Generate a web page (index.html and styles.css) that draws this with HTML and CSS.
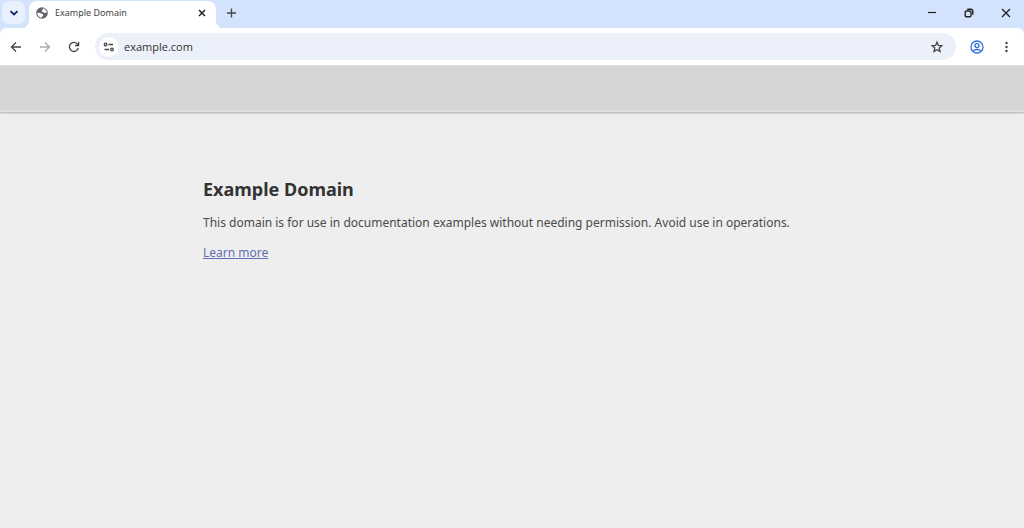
FILE: index.html
```html
<!DOCTYPE html>
<html lang="en">
<head>
  <meta charset="UTF-8">
  <meta name="viewport" content="width=device-width, initial-scale=1.0">
  <title>Example Domain</title>
  <link rel="stylesheet" href="styles.css">
</head>
<body>
  <header class="browser">
    <div class="tab-strip">
      <button class="tab-search" type="button" aria-label="Search tabs">
        <svg width="10" height="10" viewBox="0 0 10 10"><path d="M1.5 3.2 5 6.5 8.5 3.2" stroke-width="1.800"/></svg>
      </button>
      <div class="tab">
        <svg class="globe" width="12" height="12" viewBox="0 0 24 24">
          <circle cx="12" cy="12" r="11.600"/>
          <path d="M14 2.500C18 3.500 20.800 6.500 21.500 10.500 20 12.500 18 12.500 16.500 11.500 15.500 10.500 14 10.500 12.500 10 10.500 9 11 7 12.500 6.500 13.800 6 13.500 4 14 2.500ZM2.500 11.500C6 11 9 11.500 10.500 13 12 14 14.500 14 14.800 16 15 18 12.500 17.500 12.200 19.500L12 21.500C6.500 21.200 2.500 17 2.500 11.500Z"/>
        </svg>
        <span class="tab-title">Example Domain</span>
        <button class="tab-close" type="button" aria-label="Close tab">
          <svg width="8" height="8" viewBox="0 0 8 8"><path d="M1 1 7 7M7 1 1 7" stroke-width="1.500"/></svg>
        </button>
      </div>
      <button class="new-tab" type="button" aria-label="New tab">
        <svg width="10" height="10" viewBox="0 0 10 10"><path d="M5.500 .5V9.500M1 5H10" stroke-width="1.300"/></svg>
      </button>
      <div class="window-controls">
        <button type="button" aria-label="Minimize">
          <svg width="10" height="10" viewBox="0 0 10 10"><path d="M1 4.500H9" stroke-width="1.200"/></svg>
        </button>
        <button type="button" aria-label="Restore">
          <svg width="10" height="10" viewBox="0 0 10 10"><rect x="1.200" y="3" width="5.800" height="5.800" rx="1.300" stroke-width="1.400"/><path d="M3.200 1.300H7A1.800 1.800 0 0 1 8.800 3.100V6.800" stroke-width="1.400"/></svg>
        </button>
        <button type="button" aria-label="Close">
          <svg width="10" height="10" viewBox="0 0 10 10"><path d="M1 1 9 9M9 1 1 9" stroke-width="1.300"/></svg>
        </button>
      </div>
    </div>
    <div class="toolbar">
      <button class="tool" type="button" aria-label="Back">
        <svg width="12" height="12" viewBox="0 0 12 12"><path d="M11 6H1.500M6 1.500 1.500 6 6 10.500" stroke-width="1.300"/></svg>
      </button>
      <button class="tool" type="button" aria-label="Forward" disabled>
        <svg width="12" height="12" viewBox="0 0 12 12"><path d="M1 6H10.500M6 1.500 10.500 6 6 10.500" stroke-width="1.300"/></svg>
      </button>
      <button class="tool" type="button" aria-label="Reload">
        <svg width="12" height="12" viewBox="0 0 12 12"><path d="M10.300 7A4.500 4.500 0 1 1 9.400 3.100L10.500 4.300M10.600 1V4.500H7.100" stroke-width="1.300"/></svg>
      </button>
      <div class="address-bar">
        <button class="site-info" type="button" aria-label="View site information">
          <svg width="12" height="12" viewBox="0 0 12 12"><circle cx="2.600" cy="3.500" r="1.300"/><path d="M5.500 3.500H10M1.500 8.500H6"/><circle cx="9" cy="8.500" r="1.300"/></svg>
        </button>
        <input class="url" type="text" value="example.com" aria-label="Address">
        <button class="bookmark" type="button" aria-label="Bookmark this tab">
          <svg width="14" height="14" viewBox="0 0 14 14"><path d="M7 2.200 8.400 5.400 11.800 5.700 9.200 8 10 11.500 7 9.700 4 11.500 4.800 8 2.200 5.700 5.600 5.400Z" stroke-width="1.300"/></svg>
        </button>
      </div>
      <button class="tool profile" type="button" aria-label="Profile">
        <svg width="14" height="14" viewBox="0 0 14 14"><circle cx="7" cy="7" r="6"/><circle cx="7" cy="5.600" r="2"/><path d="M2.900 11.200C4.800 8.900 9.200 8.900 11.100 11.200"/></svg>
      </button>
      <button class="tool" type="button" aria-label="Menu">
        <svg class="dots" width="12" height="12" viewBox="0 0 12 12"><circle cx="6.500" cy="2" r="1.200"/><circle cx="6.500" cy="6" r="1.200"/><circle cx="6.500" cy="10" r="1.200"/></svg>
      </button>
    </div>
  </header>

  <div class="banner"></div>

  <main class="content">
    <h1>Example Domain</h1>
    <p>This domain is for use in documentation examples without needing permission. Avoid use in operations.</p>
    <p><a href="https://iana.org/domains/example">Learn more</a></p>
  </main>
</body>
</html>
```
FILE: styles.css
```css
* {
  box-sizing: border-box;
}
body {
  margin: 0;
  min-height: 100vh;
  background: #eee;
  color: #4a4a4a;
  font-family: "Segoe UI", "Noto Sans", sans-serif;
}
button {
  display: flex;
  align-items: center;
  justify-content: center;
  flex: none;
  padding: 0;
  border: none;
  background: none;
  color: inherit;
}
svg {
  display: block;
  fill: none;
  stroke: currentColor;
}

/* Browser frame */
.browser {
  background: #d3e3fd;
  color: #444;
}
.tab-strip {
  display: flex;
  align-items: center;
  height: 28px;
  padding-left: 2px;
}
.tab-search {
  width: 23px;
  height: 23px;
  margin: 0 4px 3px 0;
  border-radius: 7px;
  background: #e9f0fe;
  color: #0b2a61;
}
.tab {
  position: relative;
  display: flex;
  align-items: center;
  gap: 7px;
  width: 187px;
  height: 27px;
  margin-top: 1px;
  padding: 0 8px 3px 7px;
  border-radius: 8px 8px 0 0;
  background: #fff;
}
/* Curved feet on both sides of the tab */
.tab::before,
.tab::after {
  content: "";
  position: absolute;
  bottom: 0;
  width: 7px;
  height: 7px;
}
.tab::before {
  right: 100%;
  background: radial-gradient(circle at 0 0, transparent 7px, #fff 7px);
}
.tab::after {
  left: 100%;
  background: radial-gradient(circle at 100% 0, transparent 7px, #fff 7px);
}
.globe circle {
  fill: #5f6368;
  stroke: none;
}
.globe path {
  fill: #fff;
  stroke: none;
}
.tab-title {
  flex: 1;
  font-size: 9px;
  line-height: 12px;
}
.tab-close {
  width: 12px;
  height: 12px;
  color: #222;
}
.new-tab {
  width: 20px;
  height: 20px;
  margin: 0 0 3px 5px;
}
.window-controls {
  display: flex;
  margin: 0 0 3px auto;
}
.window-controls button {
  width: 37px;
  height: 24px;
  color: #222;
}
.toolbar {
  display: flex;
  align-items: center;
  gap: 5px;
  height: 38px;
  padding: 0 6px 0 4px;
  border-bottom: 1px solid #e3e3e3;
  border-radius: 6px 6px 0 0;
  background: #fff;
}
.tool {
  width: 24px;
  height: 24px;
}
.tool:disabled {
  color: #aaa;
}
.address-bar {
  display: flex;
  align-items: center;
  flex: 1;
  min-width: 0;
  height: 27px;
  margin: 0 4px;
  padding: 0 8px 0 4px;
  border-radius: 14px;
  background: #ebf0fa;
}
.site-info {
  width: 20px;
  height: 20px;
  border-radius: 50%;
  background: #fff;
}
.site-info svg {
  stroke-width: 1.3;
}
.url {
  flex: 1;
  min-width: 0;
  padding: 0 5px;
  border: none;
  outline: none;
  background: none;
  color: #333;
  font: 11px/16px "Segoe UI", "Open Sans", sans-serif;
}
.bookmark {
  width: 22px;
  height: 22px;
}
.profile {
  color: #2f6fdc;
}
.profile svg {
  stroke-width: 1.3;
}
.dots {
  fill: currentColor;
  stroke: none;
}

/* Page */
.banner {
  height: 46px;
  border-bottom: 2px solid #dedede;
  background: #d5d5d5;
  box-shadow: 0 1px 2px #aaa;
}
.content {
  max-width: 618px;
  margin: 64px auto 0;
}
h1 {
  margin: 0 0 12px;
  color: #333;
  font-size: 18px;
  line-height: 26px;
}
p {
  margin: 0 0 12px;
  font-size: 12px;
  line-height: 18px;
}
a {
  color: #6070b0;
}
```
